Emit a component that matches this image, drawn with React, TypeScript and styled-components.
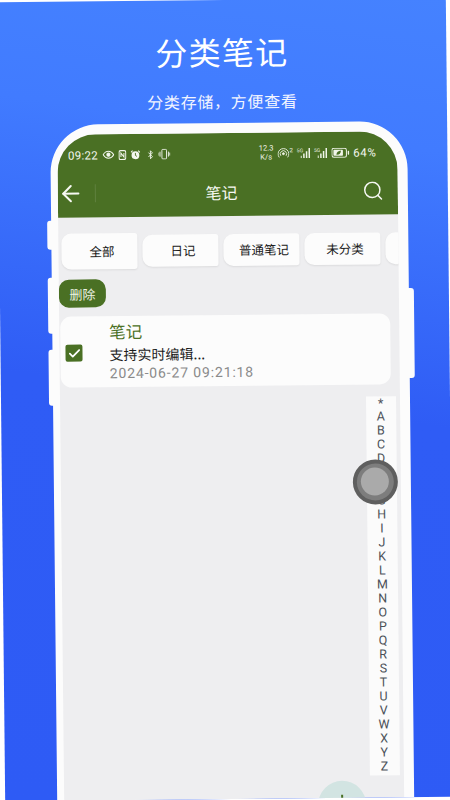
import React from 'react';
import styled, { createGlobalStyle } from 'styled-components';
import { ArrowLeft, Check } from 'lucide-react';

const CJK = '"Noto Sans CJK SC", "Noto Sans", sans-serif';
const GREEN = '#4a7024';

const Global = createGlobalStyle`
  html, body { margin: 0; padding: 0; background: #fff; width: 450px; height: 800px; overflow: hidden; }
  * { box-sizing: border-box; }
`;

const Slide = styled.main`
  width: 449px;
  height: 799px;
  margin-left: 0.5px;
  display: flex;
  flex-direction: column;
  align-items: center;
  overflow: hidden;
  padding-top: 28px;
  transform: rotate(-0.6deg);
  background: linear-gradient(188deg, #4582ff 0%, #417bff 18%, #2f5cf5 50%, #2e5bf5 100%);
  font-family: ${CJK};
`;

const Heading = styled.h1`
  margin: 0;
  font-size: 32px;
  line-height: 46px;
  font-weight: 400;
  letter-spacing: 1.2px;
  color: #fff;
`;

const Subheading = styled.p`
  margin: 15px 0 0;
  font-size: 16px;
  line-height: 24px;
  letter-spacing: 0.7px;
  color: #f2f5ff;
`;

const Phone = styled.section`
  position: relative;
  flex: 1;
  align-self: flex-start;
  width: 357px;
  margin: 9.5px 0 0 52px;
  padding: 10.5px 10px 0 7px;
  background: #fcfcfc;
  border-radius: 48px 48px 0 0;
`;

const SideKey = styled.span<{ $side: 'left' | 'right'; $top: number; $height: number }>`
  position: absolute;
  top: ${p => p.$top}px;
  height: ${p => p.$height}px;
  width: 8px;
  ${p => (p.$side === 'left' ? 'left: -4px;' : 'right: -5px;')}
  background: #fcfcfc;
  border-radius: 3px;
`;

const Screen = styled.div`
  position: relative;
  height: 100%;
  background: #eeeef0;
  border-radius: 38px 38px 0 0;
  overflow: hidden;
`;

const AppHeader = styled.header`
  background: ${GREEN};
  color: #fff;
`;

const StatusBar = styled.div`
  height: 39px;
  padding: 2px 21px 0 10.5px;
  display: flex;
  align-items: center;
  justify-content: space-between;
  font-family: Roboto, sans-serif;
`;

const StatusGroup = styled.div`
  display: flex;
  align-items: center;
  gap: 4px;
`;

const Clock = styled.span`
  font-size: 11.5px;
  letter-spacing: 0.3px;
  color: #f4f7ef;
`;

const Speed = styled.span`
  font-size: 7.5px;
  line-height: 8.5px;
  text-align: center;
  color: #f0f4e8;
`;

const TinySup = styled.span`
  font-size: 6px;
  margin: -7px 0 0 -4px;
  color: #f0f4e8;
`;

const Percent = styled.span`
  font-size: 11.5px;
  letter-spacing: 0.6px;
  color: #f4f7ef;
`;

const Toolbar = styled.div`
  height: 43.5px;
  padding-bottom: 3.5px;
  display: flex;
  align-items: center;
`;

const BackButton = styled.span`
  display: flex;
  width: 26px;
  margin-right: 10.5px;
`;

const ToolbarDivider = styled.span`
  width: 1px;
  height: 18px;
  background: rgba(255, 255, 255, 0.12);
  margin-right: 110px;
`;

const ToolbarTitle = styled.span`
  font-size: 16px;
  line-height: 24px;
  width: 33px;
  color: #f6f8f2;
`;

const ToolbarEnd = styled.span`
  flex: 1;
  display: flex;
  justify-content: flex-end;
  padding-right: 15px;
`;

const ChipRow = styled.nav`
  margin-top: 16px;
  height: 36px;
  padding-left: 3px;
  display: flex;
  align-items: center;
  gap: 5px;
`;

const Chip = styled.span<{ $active?: boolean }>`
  flex: 0 0 76px;
  height: ${p => (p.$active ? 36 : 32)}px;
  padding-left: 5px;
  display: flex;
  align-items: center;
  justify-content: center;
  font-size: 12.5px;
  color: #1a1a1a;
  background: #fcfcfc;
  border-radius: 10px 3px 3px 10px;
  box-shadow: 0 1px 2px rgba(0, 0, 0, 0.08);
`;

const DeleteButton = styled.button`
  display: block;
  width: 47px;
  height: 28px;
  margin: 10.5px 0 0;
  padding: 0;
  border: 0;
  border-radius: 10px;
  background: ${GREEN};
  color: #eef3e6;
  font-family: ${CJK};
  font-size: 13px;
`;

const NoteCard = styled.article`
  width: 330px;
  height: 71px;
  margin: 9px 0 0 0.5px;
  padding-left: 5.5px;
  display: flex;
  align-items: center;
  background: #fcfcfc;
  border-radius: 11px;
`;

const CheckBox = styled.span`
  width: 17px;
  height: 17px;
  margin: 2px 27px 0 0;
  display: flex;
  align-items: center;
  justify-content: center;
  background: ${GREEN};
  border-radius: 2px;
  color: #fff;
`;

const NoteBody = styled.div`
  display: flex;
  flex-direction: column;
  align-self: flex-start;
  padding-top: 4px;
`;

const NoteTitle = styled.span`
  font-size: 16.5px;
  line-height: 22px;
  color: ${GREEN};
`;

const NoteText = styled.span`
  font-size: 14px;
  line-height: 24px;
  color: #1d1d1d;
`;

const NoteDate = styled.span`
  font-family: Roboto, sans-serif;
  font-size: 14px;
  line-height: 14px;
  letter-spacing: 0.85px;
  color: #8a8a8a;
`;

const IndexRegion = styled.div`
  margin-top: 11.5px;
  padding-right: 4.5px;
  display: flex;
  justify-content: flex-end;
`;

const IndexBar = styled.ul`
  width: 30px;
  margin: 0;
  padding: 0 0 2px;
  list-style: none;
  background: #fbfbfb;
`;

const IndexLetter = styled.li`
  height: 13.97px;
  line-height: 13.97px;
  text-align: center;
  font-family: Roboto, sans-serif;
  font-size: 12.5px;
  color: #4b5158;
`;

const FloatingBall = styled.div`
  position: absolute;
  left: 291.5px;
  top: 327.5px;
  width: 45px;
  height: 45px;
  border-radius: 50%;
  background: #5f5f5f;
  display: flex;
  align-items: center;
  justify-content: center;
`;

const BallRing = styled.span`
  width: 37px;
  height: 37px;
  border-radius: 50%;
  background: #7d7d7d;
  display: flex;
  align-items: center;
  justify-content: center;
`;

const BallCore = styled.span`
  width: 28px;
  height: 28px;
  border-radius: 50%;
  background: #aaaaaa;
`;

const AddButton = styled.div`
  position: absolute;
  left: 254px;
  top: 649px;
  width: 48px;
  height: 48px;
  border-radius: 50%;
  background: #d2e4e2;
  &::before {
    content: '';
    position: absolute;
    left: 23px;
    top: 14px;
    width: 2px;
    height: 20px;
    background: ${GREEN};
  }
`;

const Glyph = styled.svg`
  display: block;
  flex: none;
`;

const Eye = () => (
  <Glyph width="12" height="9" viewBox="0 0 12 9" fill="none" stroke="#f4f7ef" strokeWidth="1">
    <path d="M.7 4.5C2.2 2 4 1 6 1s3.8 1 5.3 3.5C9.8 7 8 8 6 8S2.2 7 .7 4.5Z" />
    <circle cx="6" cy="4.5" r="1.6" fill="#f4f7ef" />
  </Glyph>
);

const Nfc = () => (
  <Glyph width="8" height="10" viewBox="0 0 8 10" fill="none" stroke="#f4f7ef" strokeWidth="1.2">
    <rect x=".6" y=".6" width="6.8" height="8.8" rx="1.6" />
    <path d="M2.5 7V3l3 4V3" strokeWidth="1" />
  </Glyph>
);

const Alarm = () => (
  <Glyph width="10" height="10" viewBox="0 0 10 10" fill="none">
    <circle cx="5" cy="5.3" r="3.9" fill="#f4f7ef" />
    <path d="M5 3v2.5l1.5 1" stroke={GREEN} strokeWidth=".9" />
    <path d="M.5 2.4 2.2.7M9.5 2.4 7.8.7" stroke="#f4f7ef" strokeWidth="1.1" />
  </Glyph>
);

const Bluetooth = () => (
  <Glyph width="7" height="10" viewBox="0 0 7 10" fill="none" stroke="#f4f7ef" strokeWidth=".9" style={{ marginLeft: 3 }}>
    <path d="M1 2.8 5 6.9 3 9V1l2 2.1L1 7.2" />
  </Glyph>
);

const Vibrate = () => (
  <Glyph width="12" height="11" viewBox="0 0 12 11" fill="none" stroke="#f4f7ef" strokeWidth=".9">
    <rect x="3.5" y=".7" width="4.6" height="9.6" rx=".9" />
    <path d="M1.6 3v5M.3 4v3M10 3v5M11.4 4v3" />
  </Glyph>
);

const Hotspot = () => (
  <Glyph width="12" height="11" viewBox="0 0 12 11" fill="none" stroke="#f0f4e8" strokeWidth=".9">
    <path d="M1.8 10A5.4 5.4 0 1 1 10.2 10" />
    <path d="M3.4 8.4a3.2 3.2 0 1 1 5.2 0" />
    <circle cx="6" cy="6.3" r="1" fill="#f0f4e8" />
  </Glyph>
);

const Signal = () => (
  <Glyph width="10" height="10" viewBox="0 0 10 10" fill="#f0f4e8">
    <rect x="0" y="7.6" width="1.5" height="2.4" opacity=".75" />
    <rect x="2.7" y="5.4" width="1.5" height="4.6" />
    <rect x="5.4" y="3" width="1.5" height="7" />
    <rect x="8.1" y="0" width="1.5" height="10" />
  </Glyph>
);

const NetLabel = styled.span`
  font-size: 5px;
  line-height: 5px;
  margin: -5px -3px 0 0;
  color: #f0f4e8;
`;

const SignalGroup = styled.span`
  display: flex;
  align-items: center;
`;

const Battery = () => (
  <Glyph width="18" height="10" viewBox="0 0 18 10" fill="none">
    <rect x=".5" y=".5" width="14.5" height="9" rx="2" stroke="#f0f4e8" />
    <rect x="2" y="2" width="9.5" height="6" rx=".8" fill="#f0f4e8" />
    <path d="M5 7c0-3 2-4 4.5-4.3C9.5 5.5 8 7.2 5 7Z" fill={GREEN} />
    <rect x="16.3" y="3" width="1.5" height="4" rx=".6" fill="#f0f4e8" />
  </Glyph>
);

const SearchIcon = () => (
  <Glyph width="19" height="19" viewBox="0 0 19 19" fill="none" stroke="#f6f8f2" strokeWidth="1.5" strokeLinecap="round">
    <circle cx="8.5" cy="8.5" r="7.6" />
    <path d="M14 14l3.6 3.6" />
  </Glyph>
);

const letters = ['*', ...'ABCDEFGHIJKLMNOPQRSTUVWXYZ'];
const chips = ['全部', '日记', '普通笔记', '未分类', '待办'];

export default function App() {
  return (
    <>
      <Global />
      <Slide>
        <Heading>分类笔记</Heading>
        <Subheading>分类存储，方便查看</Subheading>
        <Phone>
          <SideKey $side="left" $top={96} $height={29} />
          <SideKey $side="left" $top={153} $height={56} />
          <SideKey $side="left" $top={225} $height={56} />
          <SideKey $side="right" $top={167} $height={90} />
          <Screen>
            <AppHeader>
              <StatusBar>
                <StatusGroup>
                  <Clock>09:22</Clock>
                  <Eye />
                  <Nfc />
                  <Alarm />
                  <Bluetooth />
                  <Vibrate />
                </StatusGroup>
                <StatusGroup>
                  <Speed>12.3<br />K/s</Speed>
                  <Hotspot />
                  <TinySup>2</TinySup>
                  <SignalGroup><NetLabel>5G</NetLabel><Signal /></SignalGroup>
                  <SignalGroup><NetLabel>5G</NetLabel><Signal /></SignalGroup>
                  <Battery />
                  <Percent>64%</Percent>
                </StatusGroup>
              </StatusBar>
              <Toolbar>
                <BackButton><ArrowLeft size={26} strokeWidth={1.85} color="#f6f8f2" /></BackButton>
                <ToolbarDivider />
                <ToolbarTitle>笔记</ToolbarTitle>
                <ToolbarEnd><SearchIcon /></ToolbarEnd>
              </Toolbar>
            </AppHeader>
            <ChipRow>
              {chips.map((c, i) => (
                <Chip key={c} $active={i === 0}>{i < 4 ? c : ''}</Chip>
              ))}
            </ChipRow>
            <DeleteButton>删除</DeleteButton>
            <NoteCard>
              <CheckBox><Check size={14} strokeWidth={3} /></CheckBox>
              <NoteBody>
                <NoteTitle>笔记</NoteTitle>
                <NoteText>支持实时编辑...</NoteText>
                <NoteDate>2024-06-27 09:21:18</NoteDate>
              </NoteBody>
            </NoteCard>
            <IndexRegion>
              <IndexBar>
                {letters.map(l => <IndexLetter key={l}>{l}</IndexLetter>)}
              </IndexBar>
            </IndexRegion>
            <FloatingBall><BallRing><BallCore /></BallRing></FloatingBall>
            <AddButton />
          </Screen>
        </Phone>
      </Slide>
    </>
  );
}
